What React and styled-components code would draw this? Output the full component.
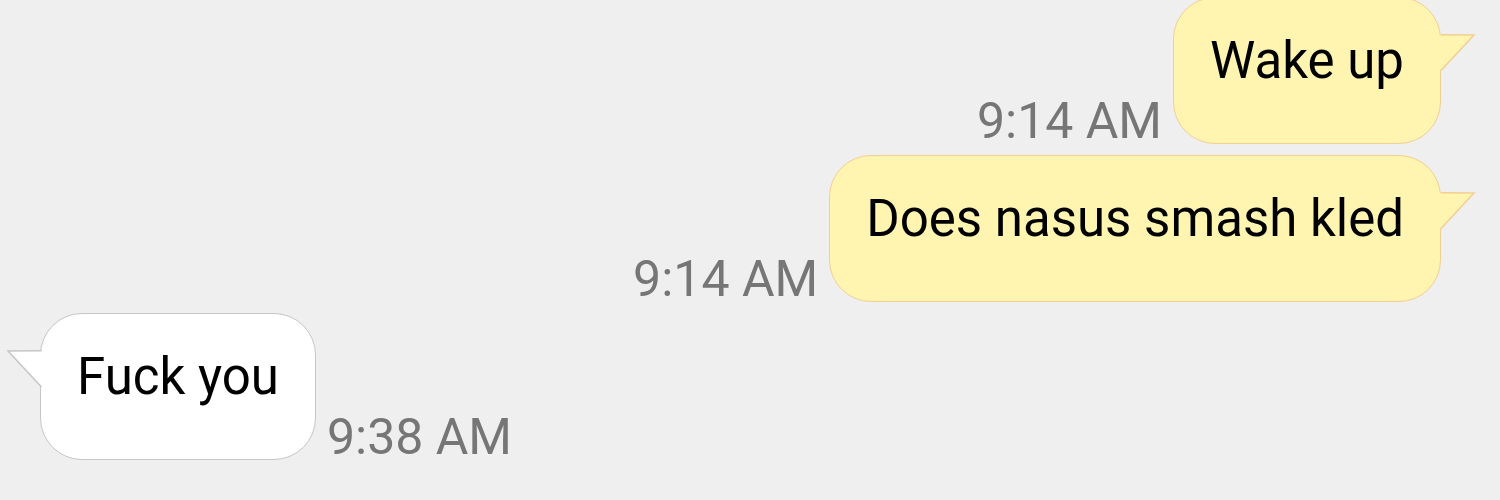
import React from 'react'
import styled, { createGlobalStyle } from 'styled-components'

const GlobalStyle = createGlobalStyle`
  html, body {
    margin: 0;
    padding: 0;
    background: #efefef;
  }
`

const Screen = styled.div`
  width: 1500px;
  height: 500px;
  overflow: hidden;
  background: #efefef;
  font-family: Roboto, "Liberation Sans", sans-serif;
`

const Thread = styled.div`
  display: flex;
  flex-direction: column;
  gap: 11px;
  margin-top: -3px;
`

const Row = styled.div`
  display: flex;
  align-items: flex-end;
  gap: 11px;
  flex-direction: ${({ outgoing }) => (outgoing ? 'row' : 'row-reverse')};
  justify-content: flex-end;
  padding: ${({ outgoing }) => (outgoing ? '0 59px 0 0' : '0 0 0 40px')};
`

const Time = styled.span`
  font-size: 50px;
  line-height: 50px;
  color: #767676;
  margin-bottom: -2px;
  white-space: nowrap;
`

const Bubble = styled.div`
  position: relative;
  padding: 33px 36px 52px;
  border-radius: 42px;
  border: 1.5px solid ${({ outgoing }) => (outgoing ? '#f2cf93' : '#c6c6c6')};
  background: ${({ outgoing }) => (outgoing ? '#fff5b1' : '#ffffff')};
  color: #000;
  font-size: 51px;
  line-height: 60px;
  white-space: nowrap;
`

const Tail = styled.svg`
  position: absolute;
  top: 36px;
  width: 38px;
  height: 40px;
  overflow: visible;
  ${({ outgoing }) => (outgoing ? 'right: -36.5px;' : 'left: -36.5px; transform: scaleX(-1);')}
`

function BubbleTail({ outgoing }) {
  const fill = outgoing ? '#fff5b1' : '#ffffff'
  const stroke = outgoing ? '#f2cf93' : '#c6c6c6'
  return (
    <Tail outgoing={outgoing} viewBox="0 0 38 40">
      <polygon points="0,0.75 35,1 2,37 0,37" fill={fill} />
      <polyline points="1.5,0.75 35,1 1.5,37" fill="none" stroke={stroke} strokeWidth="1.5" strokeLinejoin="miter" />
    </Tail>
  )
}

const messages = [
  { text: 'Wake up', time: '9:14 AM', outgoing: true },
  { text: 'Does nasus smash kled', time: '9:14 AM', outgoing: true },
  { text: 'Fuck you', time: '9:38 AM', outgoing: false },
]

export default function App() {
  return (
    <Screen>
      <GlobalStyle />
      <Thread>
        {messages.map((m, i) => (
          <Row key={i} outgoing={m.outgoing}>
            <Time>{m.time}</Time>
            <Bubble outgoing={m.outgoing}>
              {m.text}
              <BubbleTail outgoing={m.outgoing} />
            </Bubble>
          </Row>
        ))}
      </Thread>
    </Screen>
  )
}
